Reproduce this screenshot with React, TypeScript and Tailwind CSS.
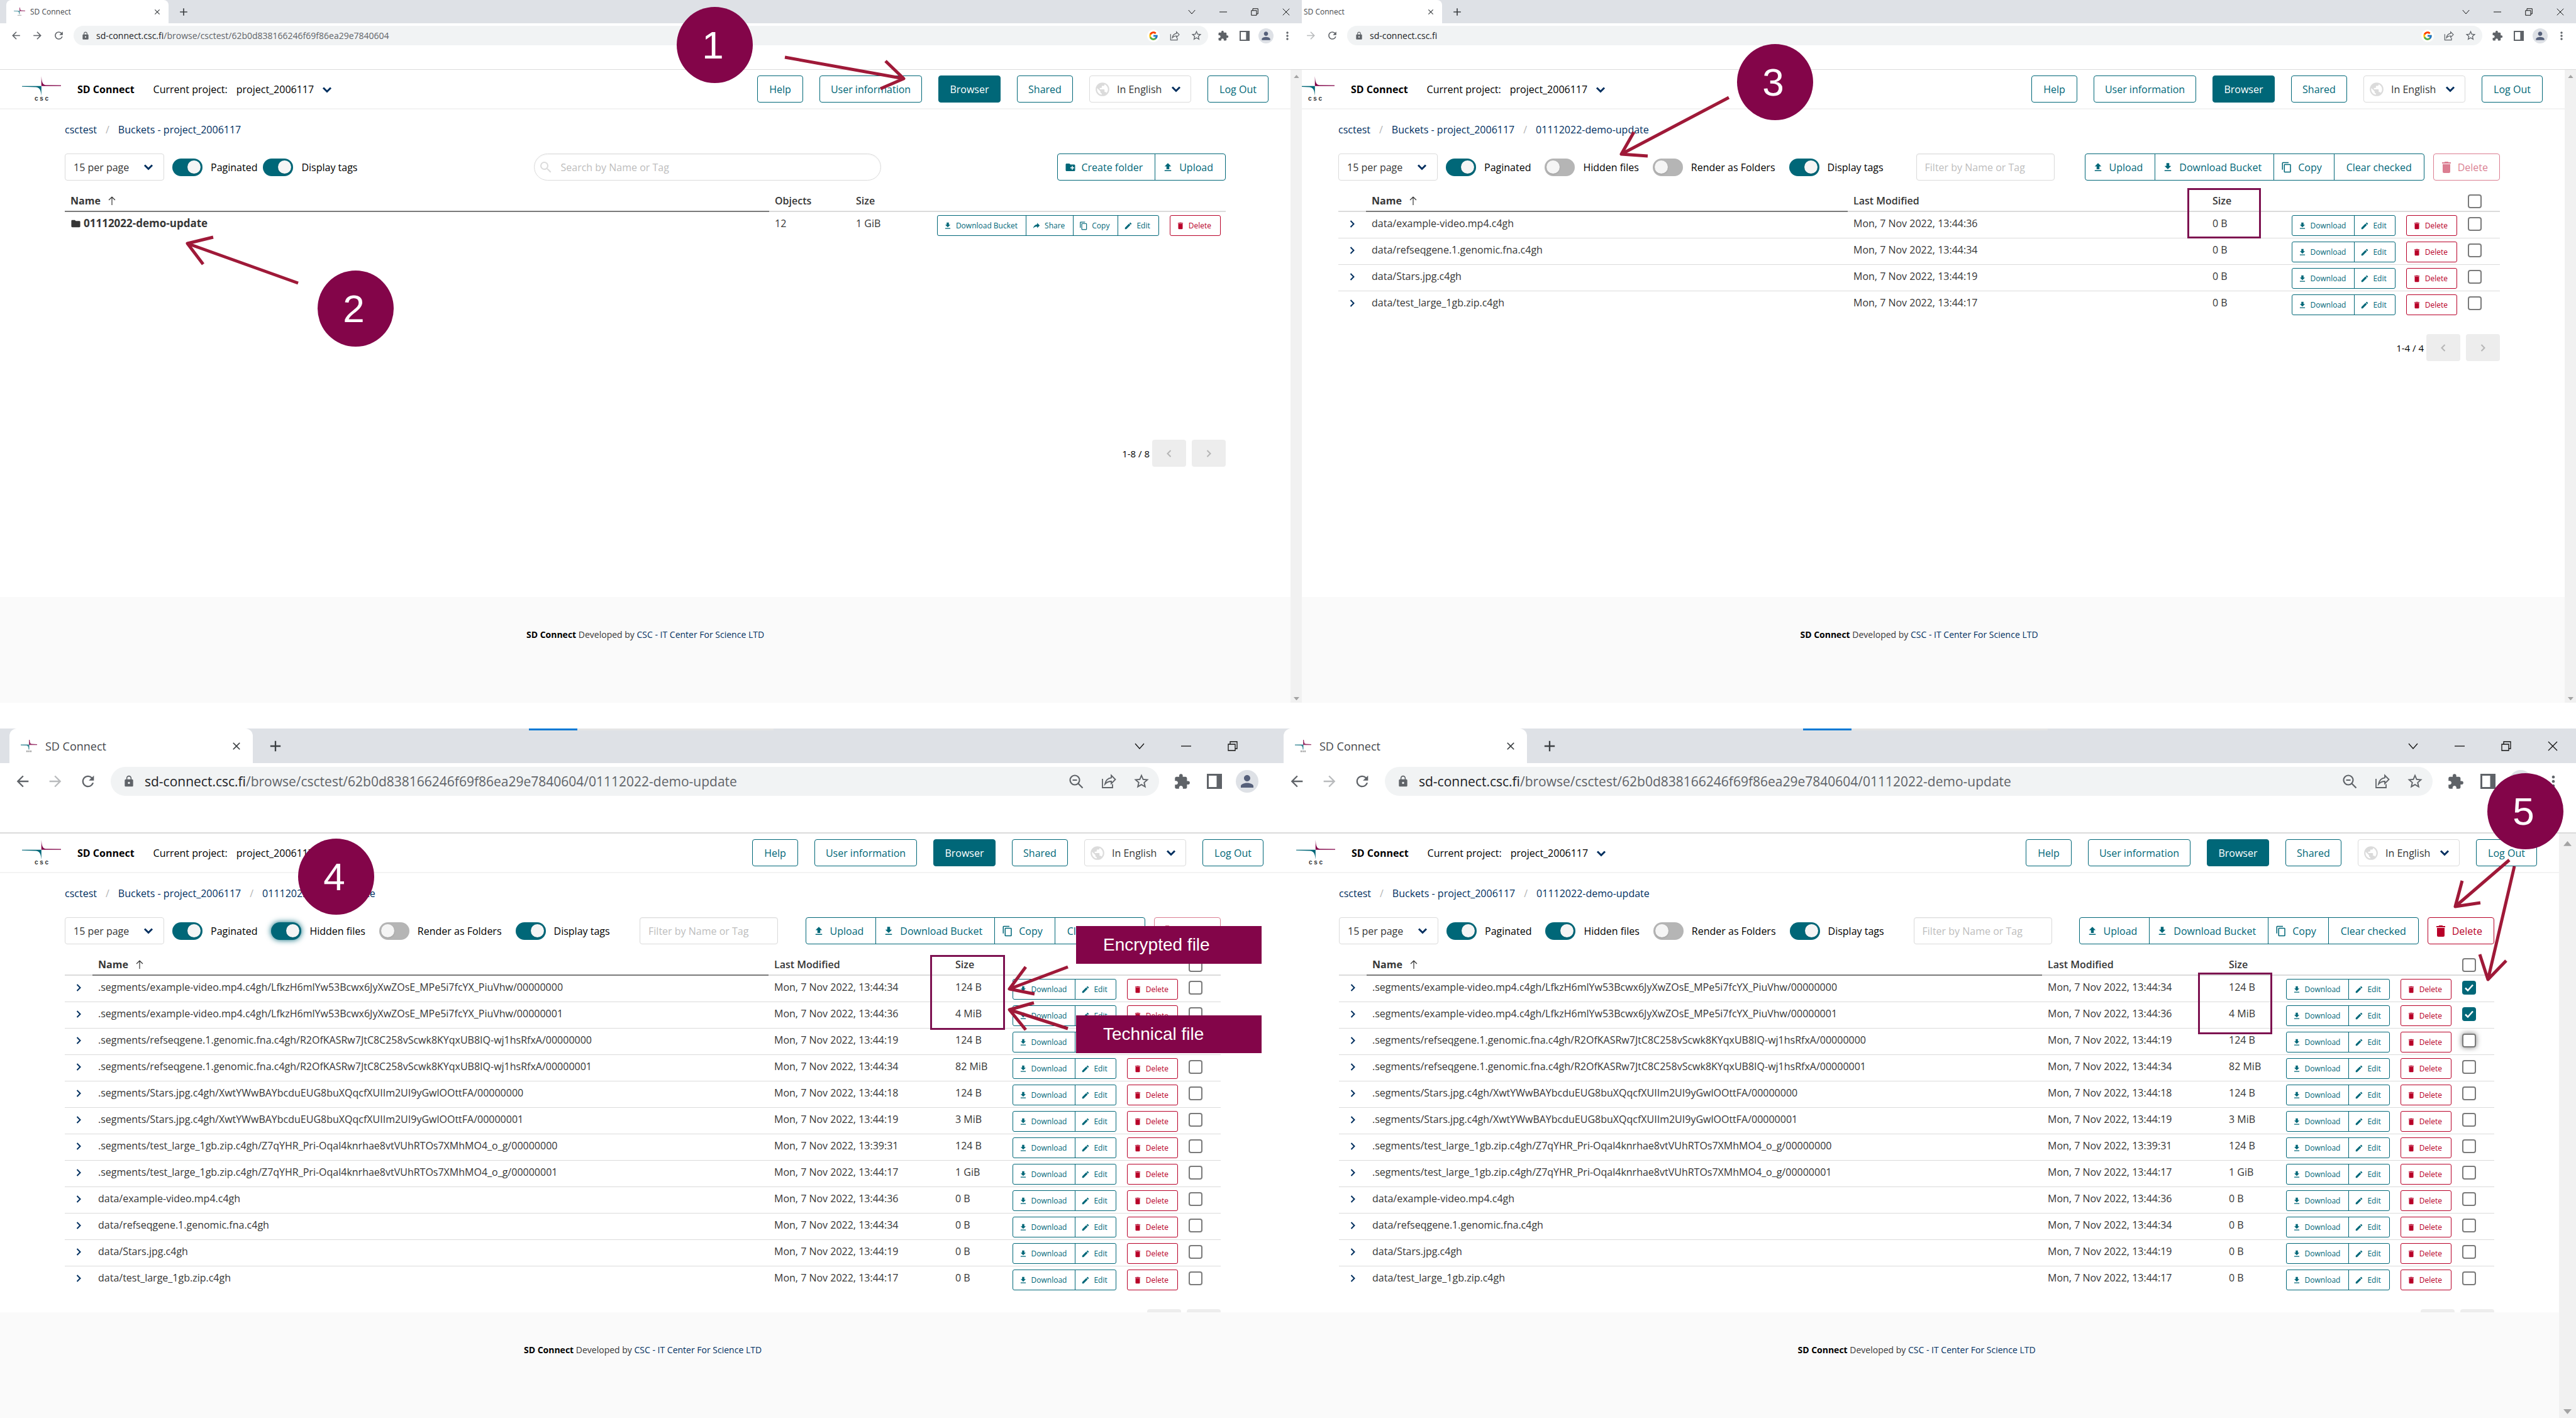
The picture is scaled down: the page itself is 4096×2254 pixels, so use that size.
import React from "react";
import { FcGoogle } from "react-icons/fc";
import {
  MdAdd,
  MdArrowBack,
  MdArrowForward,
  MdClose,
  MdExtension,
  MdLock,
  MdMoreVert,
  MdPerson,
  MdRefresh,
  MdSearch,
  MdStarBorder,
} from "react-icons/md";

/* ---------- icons ---------- */

const paths = {
  upload: "M9,16V10H5L12,3L19,10H15V16H9M5,20V18H19V20H5Z",
  download: "M5,20H19V18H5M19,9H15V3H9V9H5L12,16L19,9Z",
  trash:
    "M19,4H15.5L14.5,3H9.5L8.5,4H5V6H19M6,19A2,2 0 0,0 8,21H16A2,2 0 0,0 18,19V7H6V19Z",
  pencil:
    "M20.71,7.04C21.1,6.65 21.1,6 20.71,5.63L18.37,3.29C18,2.9 17.35,2.9 16.96,3.29L15.12,5.12L18.87,8.87M3,17.25V21H6.75L17.81,9.93L14.06,6.18L3,17.25Z",
  copy: "M19,21H8V7H19M19,5H8A2,2 0 0,0 6,7V21A2,2 0 0,0 8,23H19A2,2 0 0,0 21,21V7A2,2 0 0,0 19,5M16,1H4A2,2 0 0,0 2,3V17H4V3H16V1Z",
  share: "M21,11L14,4V8C7,9 4,14 3,19C5.5,15.5 9,13.9 14,13.9V18L21,11Z",
  folder:
    "M10,4H4C2.89,4 2,4.89 2,6V18A2,2 0 0,0 4,20H20A2,2 0 0,0 22,18V8C22,6.89 21.1,6 20,6H12L10,4Z",
  folderPlus:
    "M10,4L12,6H20A2,2 0 0,1 22,8V18A2,2 0 0,1 20,20H4C2.89,20 2,19.1 2,18V6C2,4.89 2.89,4 4,4H10M15,9V12H12V14H15V17H17V14H20V12H17V9H15Z",
  earth:
    "M17.9,17.39C17.64,16.59 16.89,16 16,16H15V13A1,1 0 0,0 14,12H8V10H10A1,1 0 0,0 11,9V7H13A2,2 0 0,0 15,5V4.59C17.93,5.77 20,8.64 20,12C20,14.08 19.2,15.97 17.9,17.39M11,19.93C7.05,19.44 4,16.08 4,12C4,11.38 4.08,10.78 4.21,10.21L9,15V16A2,2 0 0,0 11,18M12,2A10,10 0 1,0 22,12A10,10 0 0,0 12,2Z",
};
type IconName = keyof typeof paths;

function Icon({ name, className }: { name: IconName; className: string }) {
  return (
    <svg viewBox="0 0 24 24" fill="currentColor" className={className} aria-hidden="true">
      <path d={paths[name]} />
    </svg>
  );
}

function ChevronDown({ className }: { className: string }) {
  return (
    <svg viewBox="0 0 16 10" className={className} fill="none" stroke="#002f5f" strokeWidth="3" aria-hidden="true">
      <path d="M2 1.5 8 7.5 14 1.5" />
    </svg>
  );
}

function ChevronSide({ className, flip }: { className: string; flip?: boolean }) {
  return (
    <svg viewBox="0 0 8 12" className={className} fill="none" stroke="currentColor" strokeWidth="2" aria-hidden="true">
      <path d={flip ? "M6.5 1 1.5 6 6.5 11" : "M1.5 1 6.5 6 1.5 11"} />
    </svg>
  );
}

function ShareOut({ className }: { className: string }) {
  return (
    <svg viewBox="0 0 24 24" className={className} fill="none" stroke="currentColor" strokeWidth="1.8" aria-hidden="true">
      <path d="M2 8V22H18V16.5" />
      <path d="M16 2.5 22.5 9 16 15.5V12C12 12 9 13 6 16.5 7 11 10.500 7 16 6.300Z" />
    </svg>
  );
}

function CscMark({ className }: { className: string }) {
  return (
    <svg viewBox="160 550 284 145" className={className} aria-hidden="true">
      <path fill="#830549" d="M301 550C304 590 308 612 332 615L444 617V622H301Z" />
      <path fill="#006778" d="M160 622H301V695C298 662 294 634 262 630L160 627Z" />
    </svg>
  );
}

function TabMark({ className }: { className: string }) {
  return (
    <svg viewBox="0 0 26 20" className={className} aria-hidden="true">
      <path fill="#830549" opacity="0.8" d="M13 0H14.200C14.500 4 15 6 17 6.500L26 7V8.300H13Z" />
      <path fill="#006778" opacity="0.8" d="M0 7.500H13.500V15.500H12.500C12.200 11 11.500 9.500 9 9.100L0 8.800Z" />
      <path fill="#9a9a9a" d="M9 17H11V19.500H9ZM12 17H14V19.500H12ZM15 17H17V19.500H15Z" />
    </svg>
  );
}

/* ---------- browser frame ---------- */

type Frame = {
  big?: boolean;
  url: string;
  forward?: boolean;
  children: React.ReactNode;
};

function WindowControls({ big }: { big?: boolean }) {
  const box = big ? "flex w-[74px] justify-center" : "flex w-[50px] justify-center";
  const size = big ? "size-4" : "size-3";
  const icons = [
    { label: "Search tabs", d: "M1 4 8 12 15 4" },
    { label: "Minimise", d: "M0 8H16" },
    { label: "Restore", d: "M1 5H12V15H1ZM4 5V1H15V12H12" },
    { label: "Close window", d: "M1 1 15 15M15 1 1 15" },
  ];
  return (
    <div className="ml-auto flex items-center">
      {icons.map((i) => (
        <button key={i.label} aria-label={i.label} className={box}>
          <svg viewBox="0 0 16 16" className={size} fill="none" stroke="#111" strokeWidth="1.3">
            <path d={i.d} />
          </svg>
        </button>
      ))}
    </div>
  );
}

function Browser({ big, url, forward, children }: Frame) {
  const icon = big ? "size-[28px]" : "size-[19px]";
  const slot = big ? "flex w-[52px] shrink-0 justify-center" : "flex w-[34px] shrink-0 justify-center";
  const [host, ...rest] = url.split("/");
  return (
    <div className="flex h-full min-w-0 flex-col">
      <div className={big ? "relative flex h-[55px] shrink-0 bg-[#dee1e6] pl-[15px]" : "flex h-[37px] shrink-0 bg-[#dee1e6] pl-[10px]"}>
        {big && (
          <div className="absolute top-0 left-[841px] flex h-[3px] w-[389px] bg-[#e5e5e5]">
            <div className="w-[77px] bg-[#0078d4]" />
          </div>
        )}
        <div
          className={
            big
              ? "flex w-[387px] items-center rounded-t-xl bg-white pr-[16px] pl-[18px]"
              : "flex w-[258px] items-center rounded-t-lg bg-white pr-[11px] pl-[12px]"
          }
        >
          <TabMark className={big ? "w-[26px] shrink-0" : "w-[18px] shrink-0"} />
          <span className={big ? "ml-[13px] text-[18px] text-[#45484c]" : "ml-2 text-[12px] text-[#45484c]"}>SD Connect</span>
          <button aria-label="Close tab" className="ml-auto text-[#3c4043]">
            <MdClose className={big ? "size-5" : "size-[14px]"} />
          </button>
        </div>
        <button aria-label="New tab" className={big ? "ml-[22px] text-[#3c4043]" : "ml-[14px] text-[#3c4043]"}>
          <MdAdd className={big ? "size-[28px]" : "size-[20px]"} />
        </button>
        <WindowControls big={big} />
      </div>

      <div
        className={
          big
            ? "flex h-[112px] shrink-0 items-start border-b-2 border-[#dbdbdb] bg-white pt-[6px] pr-[10px] pl-[10px] text-[#5f6368]"
            : "flex h-[74px] shrink-0 items-start border-b border-[#dbdbdb] bg-white pt-[4px] pr-[6px] pl-[8px] text-[#5f6368]"
        }
      >
        <div className={big ? "flex h-[46px] w-full items-center" : "flex h-[31px] w-full items-center"}>
          <button aria-label="Back" className={slot}>
            <MdArrowBack className={icon} />
          </button>
          <button aria-label="Forward" className={forward ? slot : slot + " text-[#b9bbbd]"}>
            <MdArrowForward className={icon} />
          </button>
          <button aria-label="Reload" className={slot}>
            <MdRefresh className={icon} />
          </button>
          <div
            className={
              big
                ? "ml-[10px] flex h-full min-w-0 flex-1 items-center rounded-full bg-[#f1f3f4] pr-[2px] pl-[19px]"
                : "ml-[7px] flex h-full min-w-0 flex-1 items-center rounded-full bg-[#f1f3f4] pr-[2px] pl-[12px]"
            }
          >
            <MdLock className={big ? "size-[20px] shrink-0" : "size-[14px] shrink-0"} />
            <span className={big ? "ml-[15px] text-[21px]" : "ml-[10px] text-[14px]"}>
              <span className="text-[#202124]">{host}</span>
              {rest.length > 0 && "/" + rest.join("/")}
            </span>
            <div className="ml-auto flex items-center">
              <button aria-label={big ? "Zoom" : "Google"} className={slot}>
                {big ? (
                  <svg viewBox="0 0 24 24" className="size-6" fill="none" stroke="currentColor" strokeWidth="2.2">
                    <circle cx="10" cy="10" r="7.500" />
                    <path d="M15.500 15.500 22.500 22.500M6.500 10H13.500" />
                  </svg>
                ) : (
                  <span className="grid size-5 shrink-0 place-items-center rounded-full bg-white">
                    <FcGoogle className="size-4" />
                  </span>
                )}
              </button>
              <button aria-label="Share page" className={slot}>
                <ShareOut className={big ? "size-6" : "size-4"} />
              </button>
              <button aria-label="Bookmark" className={slot}>
                <MdStarBorder className={icon} />
              </button>
            </div>
          </div>
          <div className={big ? "ml-[10px] flex items-center" : "ml-[7px] flex items-center"}>
            <button aria-label="Extensions" className={slot}>
              <MdExtension className={big ? "size-[27px]" : "size-[18px]"} />
            </button>
            <button aria-label="Side panel" className={slot}>
              <svg viewBox="0 0 24 24" className={big ? "size-6" : "size-4"} fill="none" stroke="currentColor" strokeWidth="3">
                <path d="M1.500 1.500H22.500V22.500H1.500Z" />
                <path d="M19 2V22" strokeWidth="7" />
              </svg>
            </button>
            <button aria-label="Profile" className={slot}>
              <span
                className={
                  big
                    ? "grid size-9 place-items-center rounded-full bg-[#dee1e6] text-[#56607a]"
                    : "grid size-6 place-items-center rounded-full bg-[#dee1e6] text-[#56607a]"
                }
              >
                <MdPerson className={big ? "size-[30px]" : "size-5"} />
              </span>
            </button>
            <button aria-label="Menu" className={slot}>
              <MdMoreVert className={big ? "size-[28px]" : "size-5"} />
            </button>
          </div>
        </div>
      </div>

      <div className="flex min-h-0 flex-1">
        <div className="flex min-w-0 flex-1 flex-col">{children}</div>
        <div
          className={
            big
              ? "flex w-[27px] flex-col items-center justify-between bg-[#f1f1f1] py-[6px]"
              : "flex w-[18px] flex-col items-center justify-between bg-[#f1f1f1] py-[4px]"
          }
        >
          <svg viewBox="0 0 10 6" className={big ? "mt-1.5 w-[13px]" : "mt-1 w-[9px]"} fill="#a3a3a3">
            <path d="M5 0 10 6H0Z" />
          </svg>
          <svg viewBox="0 0 10 6" className={big ? "w-[13px]" : "w-[9px]"} fill="#a3a3a3">
            <path d="M0 0H10L5 6Z" />
          </svg>
        </div>
      </div>
    </div>
  );
}

/* ---------- controls ---------- */

const teal = "border-[#006778] text-[#006778]";

function NavButton({ children, width, active }: { children: React.ReactNode; width: string; active?: boolean }) {
  return (
    <button
      className={
        (active
          ? "h-[43px] rounded border border-[#006778] bg-[#006778] text-white "
          : "h-[43px] rounded border border-[#006778] text-[#006778] ") + width
      }
    >
      {children}
    </button>
  );
}

type Action = { icon?: IconName; label: string };

function ActionGroup({ actions, small }: { actions: Action[]; small?: boolean }) {
  return (
    <div className={small ? "flex h-[33px] divide-x divide-[#006778] rounded-[3px] border text-[12px] " + teal : "flex h-[43px] divide-x divide-[#006778] rounded border " + teal}>
      {actions.map((a) => (
        <button
          key={a.label}
          className={
            small
              ? "flex items-center gap-[6px] pr-[13px] pl-[9px] whitespace-nowrap"
              : a.icon
                ? "flex items-center gap-[9px] pr-[19px] pl-[11px] whitespace-nowrap"
                : "px-[19px] whitespace-nowrap"
          }
        >
          {a.icon && <Icon name={a.icon} className={small ? "size-[14px]" : "size-[18px]"} />}
          {a.label}
        </button>
      ))}
    </div>
  );
}

function DeleteButton({ small, disabled }: { small?: boolean; disabled?: boolean }) {
  return (
    <button
      disabled={disabled}
      className={
        small
          ? "flex h-[33px] items-center gap-[6px] rounded-[3px] border border-[#b80028] pr-[14px] pl-[9px] text-[12px] text-[#b80028]"
          : "flex h-[43px] items-center gap-[6px] rounded border border-[#b80028] pr-[18px] pl-[8px] text-[#b80028] disabled:opacity-50"
      }
    >
      <Icon name="trash" className={small ? "size-[14px]" : "size-6"} />
      Delete
    </button>
  );
}

function Toggle({ label, on, focused }: { label: string; on?: boolean; focused?: boolean }) {
  return (
    <label className="flex items-center gap-[13px] whitespace-nowrap text-black">
      <input
        type="checkbox"
        role="switch"
        defaultChecked={on}
        className={
          "flex h-7 w-[48px] shrink-0 appearance-none items-center rounded-full bg-[#b5b5b5] px-[3px] before:block before:size-[21px] before:rounded-full before:bg-[#f5f5f5] before:shadow before:content-[''] checked:justify-end checked:bg-[#006778]" +
          (focused ? " shadow-[0_0_10px_#006778]" : "")
        }
      />
      {label}
    </label>
  );
}

function PerPage() {
  return (
    <div className="relative shrink-0 text-[#363636]">
      <select aria-label="Items per page" className="h-[43px] w-[158px] appearance-none rounded border border-[#dbdbdb] bg-white pl-[13px]">
        <option>15 per page</option>
      </select>
      <ChevronDown className="pointer-events-none absolute top-[17px] right-[17px] w-4" />
    </div>
  );
}

function Check({ label, on, focused }: { label: string; on?: boolean; focused?: boolean }) {
  return (
    <span className="relative block size-[22px]">
      <input
        type="checkbox"
        aria-label={label}
        defaultChecked={on}
        className={
          "peer block size-[22px] appearance-none rounded border-2 border-[#7a7a7a] bg-white checked:border-[#006778] checked:bg-[#006778]" +
          (focused ? " shadow-[0_0_8px_#7a7a7a]" : "")
        }
      />
      <svg viewBox="0 0 22 22" className="pointer-events-none absolute inset-0 hidden peer-checked:block" fill="none" stroke="#fff" strokeWidth="2.5">
        <path d="M5 11.500 9 15.500 17 6.500" />
      </svg>
    </span>
  );
}

function Pager({ text }: { text?: string }) {
  return (
    <div className="mt-[26px] flex items-center justify-end">
      {text && <span className="mr-1 text-[15px] text-black">{text}</span>}
      <button aria-label="Previous page" className="mr-[9px] grid h-[43px] w-[54px] place-items-center rounded bg-[#ededed] text-[#b5b5b5]">
        <ChevronSide flip className="h-3" />
      </button>
      <button aria-label="Next page" className="grid h-[43px] w-[54px] place-items-center rounded bg-[#ededed] text-[#b5b5b5]">
        <ChevronSide className="h-3" />
      </button>
    </div>
  );
}

/* ---------- page ---------- */

function Page({ crumbs, children }: { crumbs: string[]; children: React.ReactNode }) {
  return (
    <>
      <header className="flex h-[63px] shrink-0 items-center border-b-2 border-[#f3f3f3] bg-white px-[35px]">
        <div className="flex flex-col items-center">
          <CscMark className="w-[62px]" />
          <span className="font-['Liberation_Sans',sans-serif] text-[10px] leading-[10px] font-bold text-[#333]">c s c</span>
        </div>
        <strong className="ml-[26px] font-bold text-black">SD Connect</strong>
        <label className="ml-[30px] flex items-center text-black">
          Current project:
          <span className="relative ml-[14px]">
            <select className="appearance-none bg-transparent pr-[34px]">
              <option>project_2006117</option>
            </select>
            <ChevronDown className="pointer-events-none absolute top-[8px] right-[6px] w-4" />
          </span>
        </label>
        <nav className="ml-auto flex gap-[26px]">
          <NavButton width="w-[73px]">Help</NavButton>
          <NavButton width="w-[163px]">User information</NavButton>
          <NavButton width="w-[99px]" active>
            Browser
          </NavButton>
          <NavButton width="w-[89px]">Shared</NavButton>
          <div className="relative text-[#363636]">
            <select aria-label="Language" className="h-[43px] w-[162px] appearance-none rounded border border-[#dbdbdb] bg-white pl-[43px]">
              <option>In English</option>
            </select>
            <Icon name="earth" className="pointer-events-none absolute top-[9px] left-[8px] size-[26px] text-[#dbdbdb]" />
            <ChevronDown className="pointer-events-none absolute top-[17px] right-[16px] w-4" />
          </div>
          <NavButton width="w-[97px]">Log Out</NavButton>
        </nav>
      </header>
      <main className="min-h-0 flex-1 overflow-hidden bg-white px-[103px]">
        <nav aria-label="Breadcrumb" className="flex h-[64px] items-center text-[#002f5f]">
          {crumbs.map((c, i) => (
            <React.Fragment key={c}>
              {i > 0 && <span className="px-[14px] text-[#b5b5b5]">/</span>}
              <a href="#top">{c}</a>
            </React.Fragment>
          ))}
        </nav>
        {children}
      </main>
      <footer className="h-[168px] shrink-0 bg-[#fafafa] pt-[50px] text-center text-[14px] leading-5 text-[#363636]">
        <strong className="font-bold text-black">SD Connect</strong> Developed by{" "}
        <a href="#csc" className="text-[#002f5f]">
          CSC - IT Center For Science LTD
        </a>
      </footer>
    </>
  );
}

const th = "h-[50px] border-b-2 border-[#dbdbdb] px-[9px] pb-1 text-left align-bottom font-semibold";
const thName = "h-[50px] border-b-2 border-[#7a7a7a] px-[9px] pb-1 text-left align-bottom font-bold";

function NameHead() {
  return (
    <th className={thName}>
      <span className="flex items-center gap-3">
        Name
        <svg viewBox="0 0 12 14" className="w-3" fill="none" stroke="#363636" strokeWidth="1.2">
          <path d="M6 14V1.500M1 6 6 1.200 11 6" />
        </svg>
      </span>
    </th>
  );
}

function BucketPage() {
  return (
    <Page crumbs={["csctest", "Buckets - project_2006117"]}>
      <div className="mt-[6px] flex items-center">
        <PerPage />
        <div className="ml-[13px] flex gap-[9px]">
          <Toggle label="Paginated" on />
          <Toggle label="Display tags" on />
        </div>
        <div className="relative ml-auto">
          <input
            aria-label="Search"
            placeholder="Search by Name or Tag"
            className="block h-[43px] w-[552px] rounded-full border border-[#dbdbdb] pl-[42px] shadow-[inset_0_1px_2px_#0000000d] placeholder:text-[#bdbdbd]"
          />
          <MdSearch className="pointer-events-none absolute top-[10px] left-[7px] size-6 text-[#dbdbdb]" />
        </div>
        <div className="ml-[280px]">
          <ActionGroup
            actions={[
              { icon: "folderPlus", label: "Create folder" },
              { icon: "upload", label: "Upload" },
            ]}
          />
        </div>
      </div>
      <table className="w-full table-fixed border-separate border-spacing-0">
        <colgroup>
          <col />
          <col className="w-[129px]" />
          <col className="w-[129px]" />
          <col className="w-[468px]" />
        </colgroup>
        <thead>
          <tr>
            <NameHead />
            <th className={th}>Objects</th>
            <th className={th}>Size</th>
            <th className={th} />
          </tr>
        </thead>
        <tbody>
          <tr className="h-[42px]">
            <td className="px-[9px] pt-[6px] align-top text-[17px] font-bold">
              <a href="#bucket" className="flex items-center gap-[4px]">
                <Icon name="folder" className="size-[17px]" />
                01112022-demo-update
              </a>
            </td>
            <td className="px-[9px] pt-[6px] align-top">12</td>
            <td className="px-[9px] pt-[6px] align-top">1 GiB</td>
            <td className="pt-[5px] pr-2 align-top">
              <div className="flex justify-end gap-[17px]">
                <ActionGroup
                  small
                  actions={[
                    { icon: "download", label: "Download Bucket" },
                    { icon: "share", label: "Share" },
                    { icon: "copy", label: "Copy" },
                    { icon: "pencil", label: "Edit" },
                  ]}
                />
                <DeleteButton small />
              </div>
            </td>
          </tr>
        </tbody>
      </table>
      <div className="h-[294px]" />
      <Pager text="1-8 / 8" />
    </Page>
  );
}

type FileRow = { name: string; time: string; size: string; checked?: boolean; focused?: boolean };

const dataFiles: FileRow[] = [
  { name: "data/example-video.mp4.c4gh", time: "13:44:36", size: "0 B" },
  { name: "data/refseqgene.1.genomic.fna.c4gh", time: "13:44:34", size: "0 B" },
  { name: "data/Stars.jpg.c4gh", time: "13:44:19", size: "0 B" },
  { name: "data/test_large_1gb.zip.c4gh", time: "13:44:17", size: "0 B" },
];

const video = ".segments/example-video.mp4.c4gh/LfkzH6mlYw53Bcwx6JyXwZOsE_MPe5i7fcYX_PiuVhw/";
const gene = ".segments/refseqgene.1.genomic.fna.c4gh/R2OfKASRw7JtC8C258vScwk8KYqxUB8IQ-wj1hsRfxA/";
const stars = ".segments/Stars.jpg.c4gh/XwtYWwBAYbcduEUG8buXQqcfXUIIm2UI9yGwlOOttFA/";
const large = ".segments/test_large_1gb.zip.c4gh/Z7qYHR_Pri-Oqal4knrhae8vtVUhRTOs7XMhMO4_o_g/";

const allFiles: FileRow[] = [
  { name: video + "00000000", time: "13:44:34", size: "124 B" },
  { name: video + "00000001", time: "13:44:36", size: "4 MiB" },
  { name: gene + "00000000", time: "13:44:19", size: "124 B" },
  { name: gene + "00000001", time: "13:44:34", size: "82 MiB" },
  { name: stars + "00000000", time: "13:44:18", size: "124 B" },
  { name: stars + "00000001", time: "13:44:19", size: "3 MiB" },
  { name: large + "00000000", time: "13:39:31", size: "124 B" },
  { name: large + "00000001", time: "13:44:17", size: "1 GiB" },
  ...dataFiles,
];

const pickedFiles = allFiles.map((f, i) => ({ ...f, checked: i < 2, focused: i === 2 }));

type ObjectProps = {
  files: FileRow[];
  hidden?: boolean;
  hiddenFocused?: boolean;
  canDelete?: boolean;
  wide?: boolean;
  pager?: string;
};

function ObjectPage({ files, hidden, hiddenFocused, canDelete, wide, pager }: ObjectProps) {
  return (
    <Page crumbs={["csctest", "Buckets - project_2006117", "01112022-demo-update"]}>
      <div className="mt-[6px] flex items-center">
        <PerPage />
        <div className="ml-[13px] flex gap-[22px] pr-1">
          <Toggle label="Paginated" on />
          <Toggle label="Hidden files" on={hidden} focused={hiddenFocused} />
          <Toggle label="Render as Folders" />
          <Toggle label="Display tags" on />
        </div>
        <input
          aria-label="Filter"
          placeholder="Filter by Name or Tag"
          className="mx-auto block h-[43px] w-[220px] rounded border border-[#dbdbdb] pl-[13px] shadow-[inset_0_1px_2px_#0000000d] placeholder:text-[#bdbdbd]"
        />
        <div className="flex gap-[14px]">
          <ActionGroup
            actions={[
              { icon: "upload", label: "Upload" },
              { icon: "download", label: "Download Bucket" },
              { icon: "copy", label: "Copy" },
              { label: "Clear checked" },
            ]}
          />
          <DeleteButton disabled={!canDelete} />
        </div>
      </div>
      <table className="w-full table-fixed border-separate border-spacing-0">
        <colgroup>
          <col className="w-[44px]" />
          <col />
          <col className={wide ? "w-[571px]" : "w-[288px]"} />
          <col className={wide ? "w-[126px]" : "w-[91px]"} />
          <col className="w-[280px]" />
          <col className="w-[60px]" />
        </colgroup>
        <thead>
          <tr>
            <th className={th} />
            <NameHead />
            <th className={th}>Last Modified</th>
            <th className={th}>Size</th>
            <th className={th} />
            <th className={th}>
              <Check label="Select all" />
            </th>
          </tr>
        </thead>
        <tbody className="[&>tr:not(:last-child)>td]:border-b [&>tr:not(:last-child)>td]:border-[#dbdbdb]">
          {files.map((f) => (
            <tr key={f.name} className="h-[42px]">
              <td className="pt-[13px] align-top">
                <button aria-label={"Expand " + f.name} className="mx-auto block text-[#002f5f]">
                  <ChevronSide className="h-3" />
                </button>
              </td>
              <td className="px-[9px] pt-[6px] align-top whitespace-nowrap">{f.name}</td>
              <td className="px-[9px] pt-[6px] align-top whitespace-nowrap">Mon, 7 Nov 2022, {f.time}</td>
              <td className="px-[9px] pt-[6px] align-top whitespace-nowrap">{f.size}</td>
              <td className="pt-[5px] pr-2 align-top">
                <div className="flex justify-end gap-[17px]">
                  <ActionGroup
                    small
                    actions={[
                      { icon: "download", label: "Download" },
                      { icon: "pencil", label: "Edit" },
                    ]}
                  />
                  <DeleteButton small />
                </div>
              </td>
              <td className="pt-[8px] pl-[9px] align-top">
                <Check label={"Select " + f.name} on={f.checked} focused={f.focused} />
              </td>
            </tr>
          ))}
        </tbody>
      </table>
      <Pager text={pager} />
    </Page>
  );
}

/* ---------- annotations ---------- */

const arrows = [
  "M1248 91 1437 125M1408 97 1437 125 1400 141",
  "M474 450 298 387M339 377 298 387 323 420",
  "M2749 155 2578 245M2598 210 2578 245 2620 248",
  "M1698 1537 1605 1572M1631 1537 1605 1572 1645 1580",
  "M1698 1635 1605 1605M1631 1637 1605 1605 1644 1594",
  "M3990 1367 3904 1441M3915 1400 3904 1441 3944 1435",
  "M3998 1377 3956 1557M3943 1517 3956 1557 3985 1527",
];

const badge =
  "absolute grid size-[121px] place-items-center rounded-full bg-[#830549] pr-1.5 text-[62px] leading-none text-white";
const note = "absolute flex h-[60px] w-[295px] items-center bg-[#830549] pl-[43px] text-[28px] text-white";

function Annotations() {
  return (
    <div className="pointer-events-none absolute inset-0 font-['Liberation_Sans',sans-serif]">
      <div className="absolute top-[299px] left-[3478px] h-[80px] w-[117px] border-[3px] border-[#7d1150]" />
      <div className="absolute top-[1518px] left-[1479px] h-[119px] w-[119px] border-[3px] border-[#7d1150]" />
      <div className="absolute top-[1546px] left-[3495px] h-[98px] w-[118px] border-[3px] border-[#7d1150]" />
      <svg viewBox="0 0 4096 2254" className="absolute top-0 left-0 h-[2254px] w-[4096px]" fill="none" stroke="#9f1938" strokeWidth="5" strokeLinejoin="round">
        {arrows.map((d) => (
          <path key={d} d={d} />
        ))}
      </svg>
      <div className={badge + " top-[11px] left-[1076px]"}>1</div>
      <div className={badge + " top-[430px] left-[505px]"}>2</div>
      <div className={badge + " top-[70px] left-[2762px]"}>3</div>
      <div className={badge + " top-[1333px] left-[474px]"}>4</div>
      <div className={badge + " top-[1229px] left-[3955px]"}>5</div>
      <div className={note + " top-[1472px] left-[1711px]"}>Encrypted file</div>
      <div className={note + " top-[1614px] left-[1711px]"}>Technical file</div>
    </div>
  );
}

const project = "sd-connect.csc.fi/browse/csctest/62b0d838166246f69f86ea29e7840604";

export default function App() {
  return (
    <div className="relative grid h-screen grid-rows-[1117fr_1096fr] gap-y-[41px] overflow-hidden bg-white font-['Open_Sans','Noto_Sans',sans-serif] text-[16px] leading-6 text-[#363636]">
      <div className="grid min-h-0 grid-cols-[2070fr_2026fr]">
        <section className="min-h-0 min-w-0 overflow-hidden">
          <Browser url={project} forward>
            <BucketPage />
          </Browser>
        </section>
        <section className="flex min-h-0 min-w-0 justify-end overflow-hidden">
          <div className="w-[calc(100%+45px)] shrink-0">
            <Browser url="sd-connect.csc.fi">
              <ObjectPage files={dataFiles} wide pager="1-4 / 4" />
            </Browser>
          </div>
        </section>
      </div>
      <div className="grid min-h-0 grid-cols-[2026fr_2070fr]">
        <section className="min-h-0 min-w-0 overflow-hidden">
          <div className="h-full w-[calc(100%+45px)]">
            <Browser big url={project + "/01112022-demo-update"}>
              <ObjectPage files={allFiles} hidden hiddenFocused />
            </Browser>
          </div>
        </section>
        <section className="min-h-0 min-w-0 overflow-hidden">
          <Browser big url={project + "/01112022-demo-update"}>
            <ObjectPage files={pickedFiles} hidden canDelete />
          </Browser>
        </section>
      </div>
      <Annotations />
    </div>
  );
}
